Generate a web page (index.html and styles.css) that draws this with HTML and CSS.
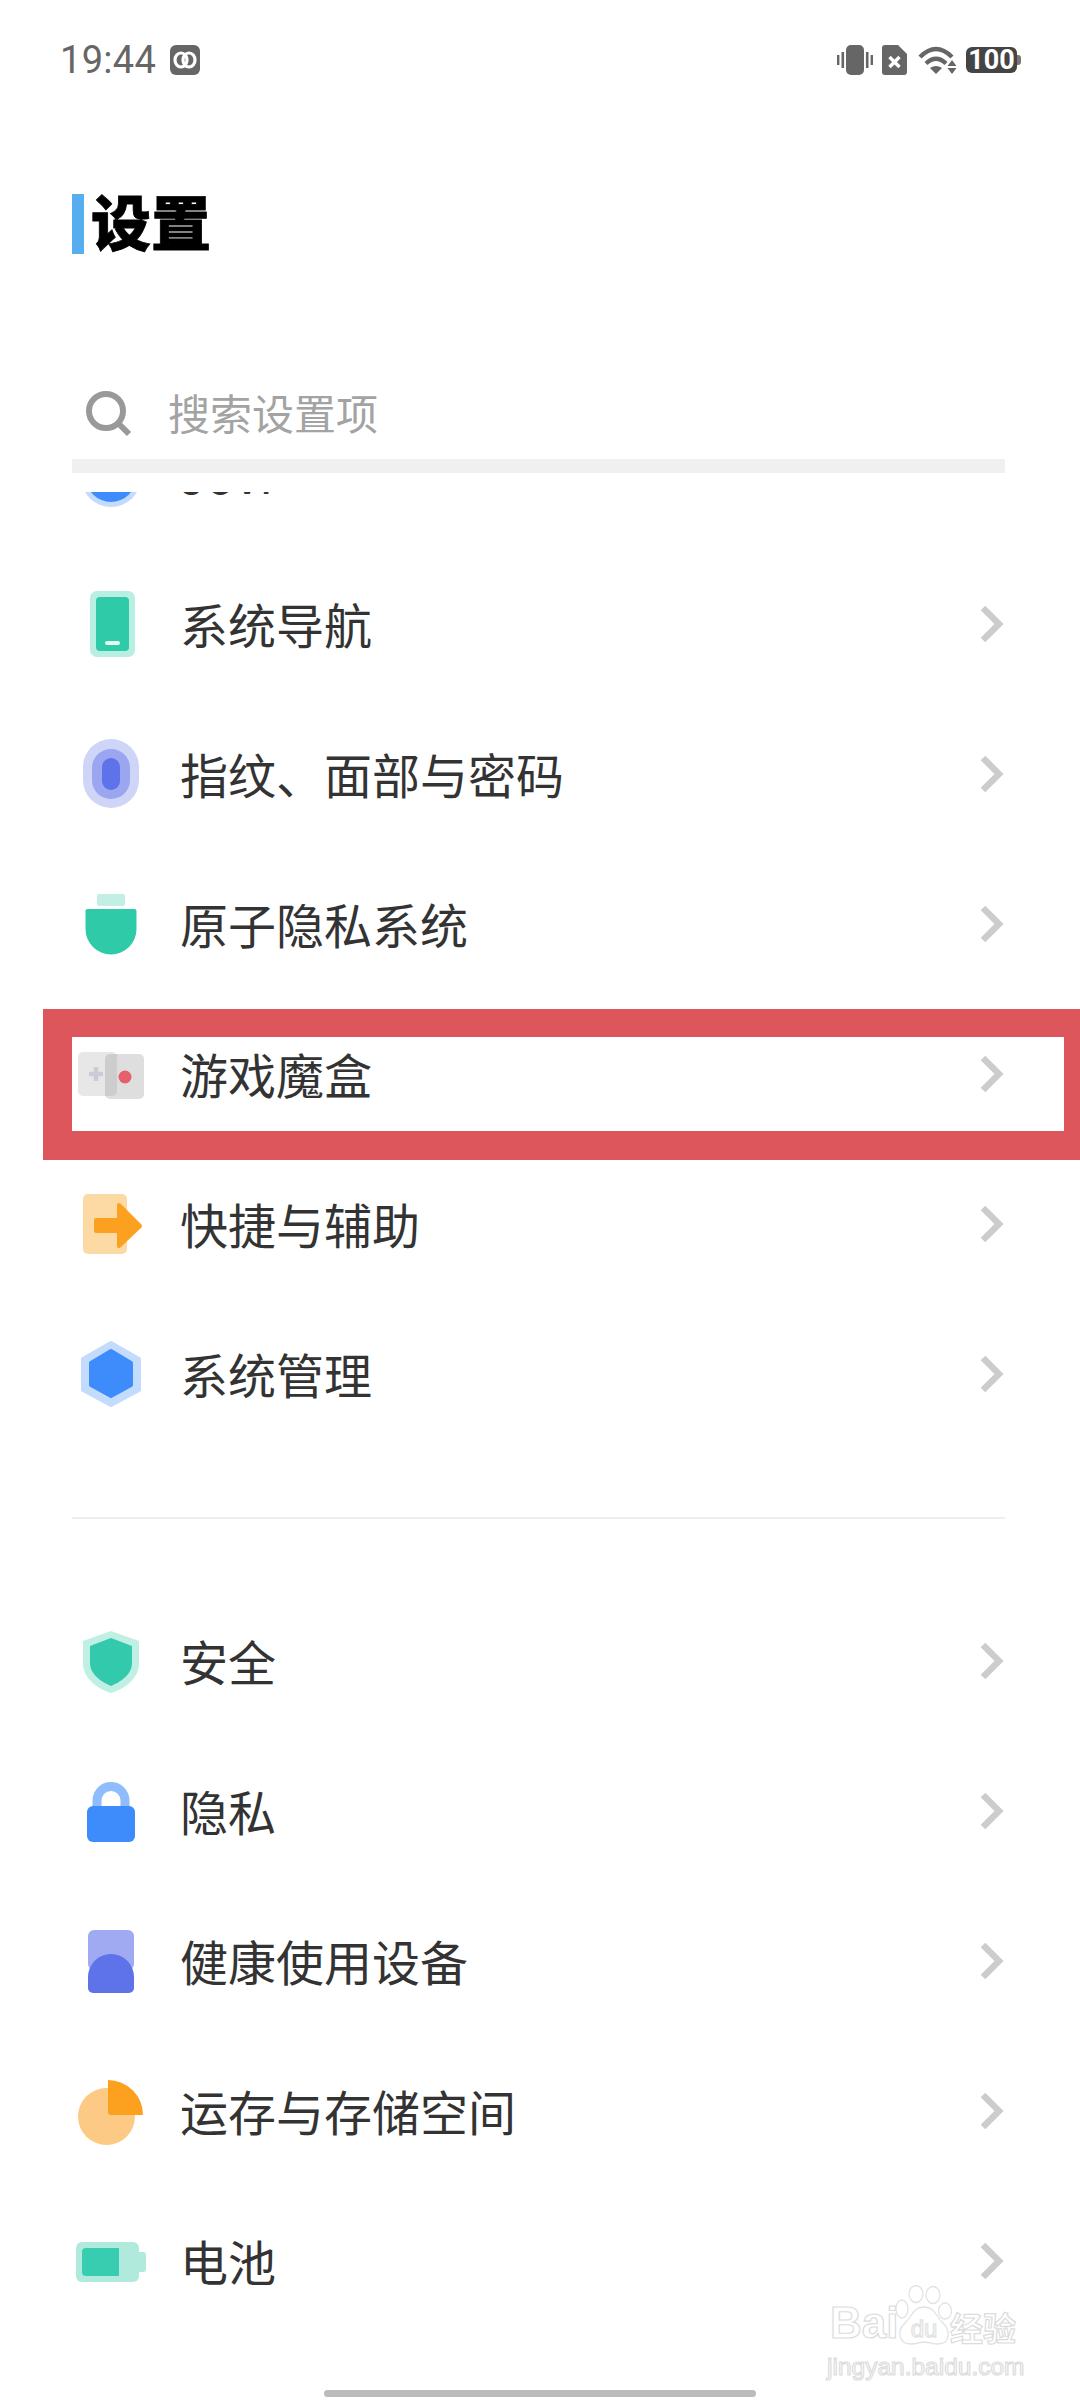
FILE: index.html
```html
<!DOCTYPE html>
<html lang="zh-CN">
<head>
<meta charset="utf-8">
<title>设置</title>
<link rel="stylesheet" href="styles.css">
</head>
<body>
<div class="page">
  <header class="status">
    <div class="status-left">
      <span class="time">19:44</span>
      <svg class="ico-app" width="30" height="30" viewBox="0 0 30 30"><rect width="30" height="30" rx="6" fill="#666"/><ellipse cx="11" cy="15" rx="6" ry="7" fill="none" stroke="#fff" stroke-width="3.200"/><ellipse cx="19" cy="15" rx="6" ry="7" fill="none" stroke="#fff" stroke-width="3.200"/></svg>
    </div>
    <div class="status-right">
      <svg width="36" height="30" viewBox="0 0 36 30" fill="#666"><rect x="9" width="18" height="30" rx="5"/><rect x="4.500" y="7" width="2.600" height="16"/><rect y="10" width="2.400" height="10"/><rect x="28.900" y="7" width="2.600" height="16"/><rect x="33.600" y="10" width="2.400" height="10"/></svg>
      <svg class="gap-sim" width="25" height="30" viewBox="0 0 25 30"><path d="M3 0H16L25 9V27a3 3 0 0 1-3 3H3a3 3 0 0 1-3-3V3a3 3 0 0 1 3-3Z" fill="#666"/><path d="M7.500 12L17.500 22M17.500 12L7.500 22" stroke="#fff" stroke-width="3.400"/></svg>
      <svg class="gap-wifi" width="39" height="28" viewBox="0 0 39 28"><path d="M2 11Q18-5 34 11" fill="none" stroke="#666" stroke-width="4.400"/><path d="M8 17.500Q18 8 28 17.500" fill="none" stroke="#666" stroke-width="4.400"/><path d="M18 28L12 22Q18 18 24 22Z" fill="#666"/><path d="M34 14L38.500 20H29.500Z M29.500 22H38.500L34 28Z" fill="#666"/></svg>
      <div class="batt gap-batt"><span class="batt-body">100</span><span class="batt-nub"></span></div>
    </div>
  </header>

  <h1 class="title"><span class="title-bar"></span><span class="title-text">设置</span></h1>

  <div class="search">
    <svg width="46" height="46" viewBox="0 0 46 46" fill="none" stroke="#999" stroke-width="6"><circle cx="20" cy="20" r="17"/><path d="M32 32L43 43"/></svg>
    <span class="search-text">搜索设置项</span>
  </div>
  <div class="search-rule"></div>

  <main class="list">
    <section class="group group-first">
      <div class="row">
        <svg class="icon" width="96" height="96" viewBox="0 0 96 96"><circle cx="49" cy="51" r="30" fill="#c3dcfd"/><circle cx="49" cy="51" r="25" fill="#3e8cfb"/></svg>
        <span class="label">Jovi</span>
        <svg class="chev" width="24" height="40" viewBox="0 0 24 40"><path d="M3 4L19 20L3 36"/></svg>
      </div>
      <div class="row">
        <svg class="icon" width="96" height="96" viewBox="0 0 96 96"><rect x="28" y="15" width="45" height="66" rx="7" fill="#b8efe2"/><rect x="34" y="21" width="33" height="54" rx="4" fill="#2fcaa8"/><rect x="43" y="65" width="15" height="4" rx="2" fill="#e4f8f3"/></svg>
        <span class="label">系统导航</span>
        <svg class="chev" width="24" height="40" viewBox="0 0 24 40"><path d="M3 4L19 20L3 36"/></svg>
      </div>
      <div class="row">
        <svg class="icon" width="96" height="96" viewBox="0 0 96 96"><rect x="21" y="13" width="56" height="69" rx="28" fill="#ced5f7"/><rect x="30" y="23" width="38" height="50" rx="19" fill="#9aa6f0"/><rect x="40" y="32" width="18" height="32" rx="9" fill="#5e72ea"/></svg>
        <span class="label">指纹、面部与密码</span>
        <svg class="chev" width="24" height="40" viewBox="0 0 24 40"><path d="M3 4L19 20L3 36"/></svg>
      </div>
      <div class="row">
        <svg class="icon" width="96" height="96" viewBox="0 0 96 96"><rect x="35" y="18" width="28" height="12" rx="2" fill="#c2eee3"/><path d="M25.500 33H72.500a2 2 0 0 1 2 2V53a25.500 25.500 0 0 1-51 0V35a2 2 0 0 1 2-2Z" fill="#2fcaa8"/></svg>
        <span class="label">原子隐私系统</span>
        <svg class="chev" width="24" height="40" viewBox="0 0 24 40"><path d="M3 4L19 20L3 36"/></svg>
      </div>
      <div class="row">
        <svg class="icon" width="96" height="96" viewBox="0 0 96 96"><rect x="16" y="26" width="39" height="44" rx="5" fill="#e7e7e7"/><rect x="43" y="28" width="39" height="45" rx="5" fill="#dedede"/><path d="M43 33a5 5 0 0 1 5-5H55V65a5 5 0 0 1-5 5H43Z" fill="#cdcdcd"/><path d="M27 48H41M34 41V55" stroke="#c9cbd6" stroke-width="4.500"/><circle cx="63" cy="51" r="6.500" fill="#e5606a"/></svg>
        <span class="label">游戏魔盒</span>
        <svg class="chev" width="24" height="40" viewBox="0 0 24 40"><path d="M3 4L19 20L3 36"/></svg>
      </div>
      <div class="row">
        <svg class="icon" width="96" height="96" viewBox="0 0 96 96"><rect x="21" y="18" width="44" height="60" rx="5" fill="#fdd9a3"/><path d="M34 44H57V29L78 50L57 70V55H34Z" fill="#fba11f" stroke="#fba11f" stroke-width="4" stroke-linejoin="round"/></svg>
        <span class="label">快捷与辅助</span>
        <svg class="chev" width="24" height="40" viewBox="0 0 24 40"><path d="M3 4L19 20L3 36"/></svg>
      </div>
      <div class="row">
        <svg class="icon" width="96" height="96" viewBox="0 0 96 96"><path d="M49 17L77 33V64L49 79L21 64V33Z" fill="#c3dcfd" stroke="#c3dcfd" stroke-width="4" stroke-linejoin="round"/><path d="M49 25L69 37V59L49 70L29 59V37Z" fill="#3e8cfb" stroke="#3e8cfb" stroke-width="4" stroke-linejoin="round"/></svg>
        <span class="label">系统管理</span>
        <svg class="chev" width="24" height="40" viewBox="0 0 24 40"><path d="M3 4L19 20L3 36"/></svg>
      </div>
    </section>

    <div class="rule"></div>

    <section class="group">
      <div class="row">
        <svg class="icon" width="96" height="96" viewBox="0 0 96 96"><path d="M49 18L77 28V50C77 66 62 76 49 80C36 76 21 66 21 50V28Z" fill="#c0efe4"/><path d="M49 25L70 33V50C70 62 58 69 49 73C40 69 28 62 28 50V33Z" fill="#33c9ac"/></svg>
        <span class="label">安全</span>
        <svg class="chev" width="24" height="40" viewBox="0 0 24 40"><path d="M3 4L19 20L3 36"/></svg>
      </div>
      <div class="row">
        <svg class="icon" width="96" height="96" viewBox="0 0 96 96"><path d="M35 46V37.500a14 14 0 0 1 28 0V46" fill="none" stroke="#8fbcfc" stroke-width="9"/><rect x="25" y="43" width="48" height="36" rx="6" fill="#3e8cfb"/></svg>
        <span class="label">隐私</span>
        <svg class="chev" width="24" height="40" viewBox="0 0 24 40"><path d="M3 4L19 20L3 36"/></svg>
      </div>
      <div class="row">
        <svg class="icon" width="96" height="96" viewBox="0 0 96 96"><rect x="26" y="17" width="46" height="40" rx="6" fill="#9faaf3"/><path d="M26 64a23 23 0 0 1 46 0V75a5 5 0 0 1-5 5H31a5 5 0 0 1-5-5Z" fill="#5e72ea"/></svg>
        <span class="label">健康使用设备</span>
        <svg class="chev" width="24" height="40" viewBox="0 0 24 40"><path d="M3 4L19 20L3 36"/></svg>
      </div>
      <div class="row">
        <svg class="icon" width="96" height="96" viewBox="0 0 96 96"><circle cx="44.500" cy="53.500" r="28.500" fill="#fdca85"/><path d="M46 17A35 35 0 0 1 81 52H49a3 3 0 0 1-3-3Z" fill="#fba11f"/></svg>
        <span class="label">运存与存储空间</span>
        <svg class="chev" width="24" height="40" viewBox="0 0 24 40"><path d="M3 4L19 20L3 36"/></svg>
      </div>
      <div class="row">
        <svg class="icon" width="96" height="96" viewBox="0 0 96 96"><path d="M77 39h4a3 3 0 0 1 3 3V56a3 3 0 0 1-3 3h-4Z" fill="#b0eadd"/><rect x="14" y="29" width="63" height="40" rx="6" fill="#b0eadd"/><path d="M24 35H57V63H24a4 4 0 0 1-4-4V39a4 4 0 0 1 4-4Z" fill="#38ccb0"/></svg>
        <span class="label">电池</span>
        <svg class="chev" width="24" height="40" viewBox="0 0 24 40"><path d="M3 4L19 20L3 36"/></svg>
      </div>
    </section>
  </main>

  <div class="frame"></div>

  <div class="watermark">
    <div class="wm-top">
      <span class="wm-bai">Bai</span>
      <svg class="wm-paw" width="58" height="60" viewBox="0 0 58 60" fill="#fff" stroke="#e2e2e2" stroke-width="1.300"><ellipse cx="7" cy="24" rx="6" ry="9"/><ellipse cx="21" cy="9" rx="7" ry="8.500"/><ellipse cx="38" cy="10" rx="7" ry="8.500"/><ellipse cx="50" cy="26" rx="6.500" ry="8"/><path d="M29 22C18 22 17 32 10 38C2 45 3 59 16 59C22 59 25 57 29 57C33 57 37 59 43 59C55 59 56 46 48 38C41 32 40 22 29 22Z"/><text x="29" y="52" text-anchor="middle" class="wm-du">du</text></svg>
      <span class="wm-jy">经验</span>
    </div>
    <div class="wm-url">jingyan.baidu.com</div>
  </div>

  <div class="home-bar"></div>
</div>
</body>
</html>
```

FILE: styles.css
```css
* { box-sizing: border-box; }
html, body { margin: 0; padding: 0; background: #fff; }
body { font-family: "Noto Sans CJK SC", "Noto Sans", sans-serif; }
.page { position: relative; width: 1080px; height: 2400px; overflow: hidden; background: #fff; }

.status { display: flex; align-items: center; justify-content: space-between; height: 120px; padding: 0 59px 0 60px; }
.status-left, .status-right { display: flex; align-items: center; }
.time { font-family: Roboto, "Liberation Sans", sans-serif; font-size: 38px; color: #666; line-height: 1; letter-spacing: .3px; }
.ico-app { margin-left: 14px; }
.gap-sim { margin-left: 9px; }
.gap-wifi { margin-left: 11px; }
.gap-batt { margin-left: 9px; }
.batt { display: flex; align-items: center; }
.batt-body { width: 51px; height: 26px; border-radius: 6px; background: #444; color: #fff; font-family: Roboto, "Liberation Sans", sans-serif; font-weight: 700; font-size: 27px; line-height: 26px; text-align: center; }
.batt-nub { width: 4px; height: 10px; background: #777; border-radius: 0 3px 3px 0; }

.title { display: flex; gap: 7px; margin: 74px 0 0; padding-left: 72px; height: 60px; font-size: 60px; line-height: 60px; font-weight: 900; color: #000; }
.title-bar { width: 12px; height: 60px; background: #56aeee; }
.title-text { margin-top: -4px; -webkit-text-stroke: .8px #000; }

.search { display: flex; align-items: center; gap: 36px; height: 84px; margin-top: 118px; padding-left: 86px; }
.search-text { margin-top: -4px; font-size: 42px; line-height: 1; color: #a3a3a3; }
.search-rule { height: 14px; margin: 3px 75px 0 72px; background: #f0f0f0; }

.list { height: 1908px; margin-top: 19px; overflow: hidden; }
.group-first { margin-top: -93px; }
.row { display: flex; align-items: center; height: 150px; padding: 0 76px 0 62px; }
.icon { flex: none; }
.label { margin: -3px 0 0 22px; font-size: 48px; line-height: 1; color: #333; }
.chev { flex: none; margin-left: auto; fill: none; stroke: #ccc; stroke-width: 6.500; }
.rule { height: 2px; margin: 68px 75px 67px 72px; background: #eee; }

.frame { position: absolute; left: 43px; top: 1009px; width: 1037px; height: 151px; border: solid #dc565c; border-width: 28px 16px 29px 29px; }

.watermark { position: absolute; left: 827px; top: 2285px; width: 200px; color: #fff; -webkit-text-stroke: 1.200px #dcdcdc; }
.wm-top { display: flex; align-items: flex-end; height: 60px; padding-left: 3px; }
.wm-bai { font-family: "Liberation Sans", sans-serif; font-weight: 700; font-size: 44px; line-height: 44px; width: 65px; }
.wm-paw { flex: none; }
.wm-du { font-family: "Liberation Sans", sans-serif; font-size: 24px; }
.wm-jy { font-size: 33px; line-height: 36px; font-weight: 700; margin-left: -3px; }
.wm-url { font-family: "Liberation Sans", sans-serif; font-size: 24.500px; line-height: 30px; margin-top: 7px; white-space: nowrap; }

.home-bar { position: absolute; left: 324px; bottom: 3px; width: 432px; height: 7px; border-radius: 4px; background: #bbb; }
```
